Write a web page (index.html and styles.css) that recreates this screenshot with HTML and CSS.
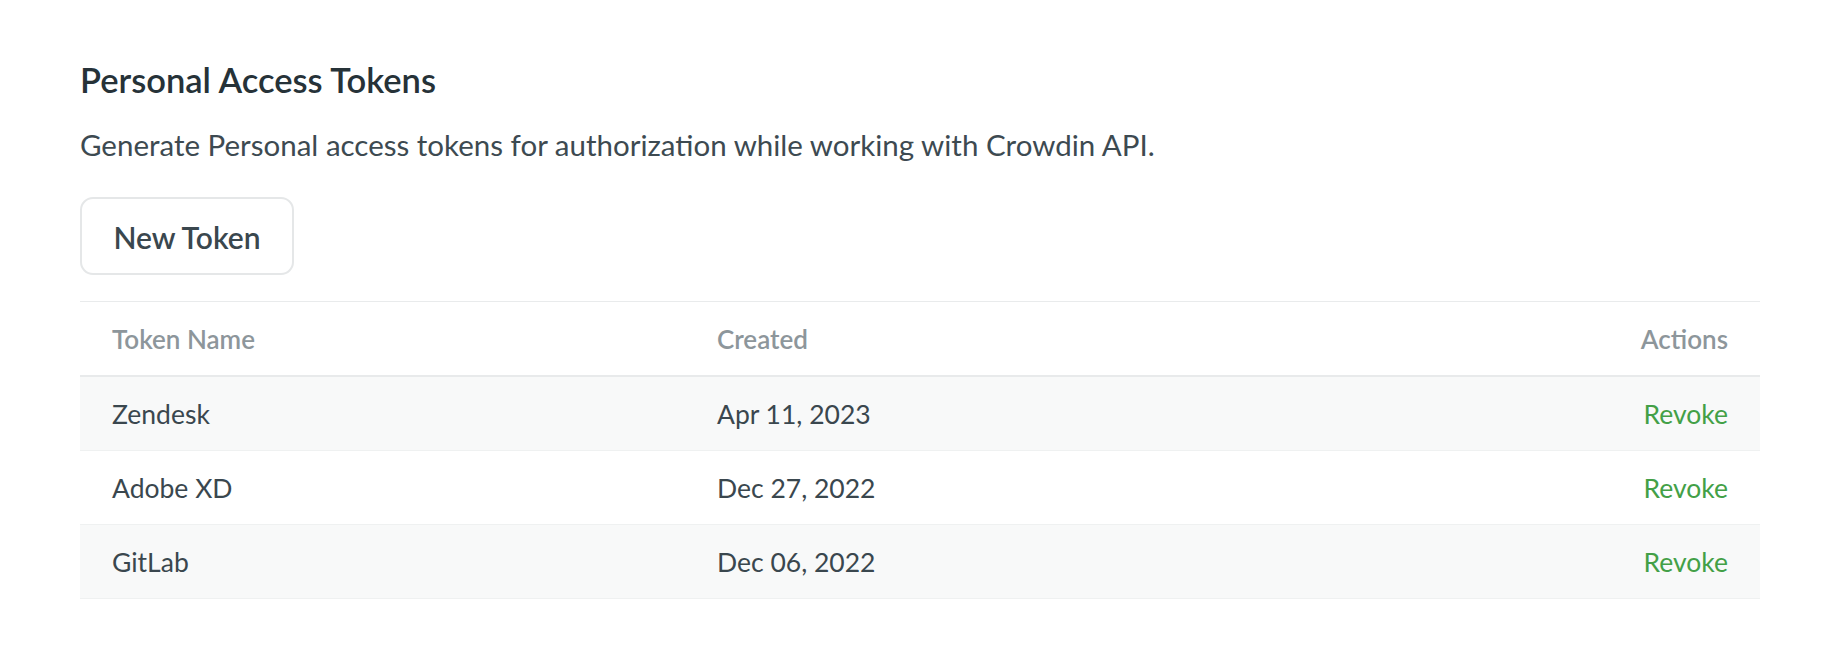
FILE: index.html
```html
<!DOCTYPE html>
<html lang="en">
<head>
<meta charset="utf-8">
<title>Personal Access Tokens</title>
<link rel="stylesheet" href="styles.css">
</head>
<body>
<main class="page">
  <h1 class="title">Personal Access Tokens</h1>
  <p class="desc">Generate Personal access tokens for authorization while working with Crowdin API.</p>
  <div class="actions-bar">
    <button class="btn" type="button">New Token</button>
  </div>
  <div class="table">
    <div class="row head">
      <div class="cell">Token Name</div>
      <div class="cell">Created</div>
      <div class="cell right">Actions</div>
    </div>
    <div class="row striped">
      <div class="cell">Zendesk</div>
      <div class="cell">Apr 11, 2023</div>
      <div class="cell right"><a class="link" href="#">Revoke</a></div>
    </div>
    <div class="row">
      <div class="cell">Adobe XD</div>
      <div class="cell">Dec 27, 2022</div>
      <div class="cell right"><a class="link" href="#">Revoke</a></div>
    </div>
    <div class="row striped">
      <div class="cell">GitLab</div>
      <div class="cell">Dec 06, 2022</div>
      <div class="cell right"><a class="link" href="#">Revoke</a></div>
    </div>
  </div>
</main>
</body>
</html>
```

FILE: styles.css
```css
* { box-sizing: border-box; }

html, body {
  margin: 0;
  padding: 0;
  background: #ffffff;
}

body {
  font-family: Lato, "Open Sans", "Liberation Sans", sans-serif;
  color: #3a474e;
}

.page {
  display: flex;
  flex-direction: column;
  padding: 60px 80px 0;
}

.title {
  margin: 0;
  font-size: 34.5px;
  line-height: 40px;
  font-weight: 600;
  color: #263238;
}

.desc {
  margin: 27px 0 0;
  font-size: 29.5px;
  line-height: 36px;
  font-weight: 400;
  color: #3d4a51;
}

.actions-bar {
  display: flex;
  margin-top: 34px;
}

.btn {
  height: 78px;
  width: 214px;
  padding: 2px 0 0;
  border: 2px solid #e5e7e8;
  border-radius: 13px;
  background: #ffffff;
  font-family: inherit;
  font-size: 30px;
  font-weight: 600;
  color: #3a474e;
  display: flex;
  align-items: center;
  justify-content: center;
}

.table {
  margin-top: 26px;
  border-top: 1px solid #e9ebec;
  display: flex;
  flex-direction: column;
}

.row {
  display: grid;
  grid-template-columns: 605px 1fr auto;
  align-items: center;
  height: 74px;
  border-bottom: 1px solid #eff1f1;
  font-size: 26.5px;
  color: #3a474e;
}

.row.head {
  height: 75px;
  border-bottom: 2px solid #e8eaeb;
  font-size: 26px;
  font-weight: 600;
  color: #8d969b;
}

.row.striped {
  background: #f8f9f9;
}

.cell {
  padding: 0 32px;
  white-space: nowrap;
}

.cell.right {
  text-align: right;
}

.link {
  color: #43a047;
  text-decoration: none;
}
```
